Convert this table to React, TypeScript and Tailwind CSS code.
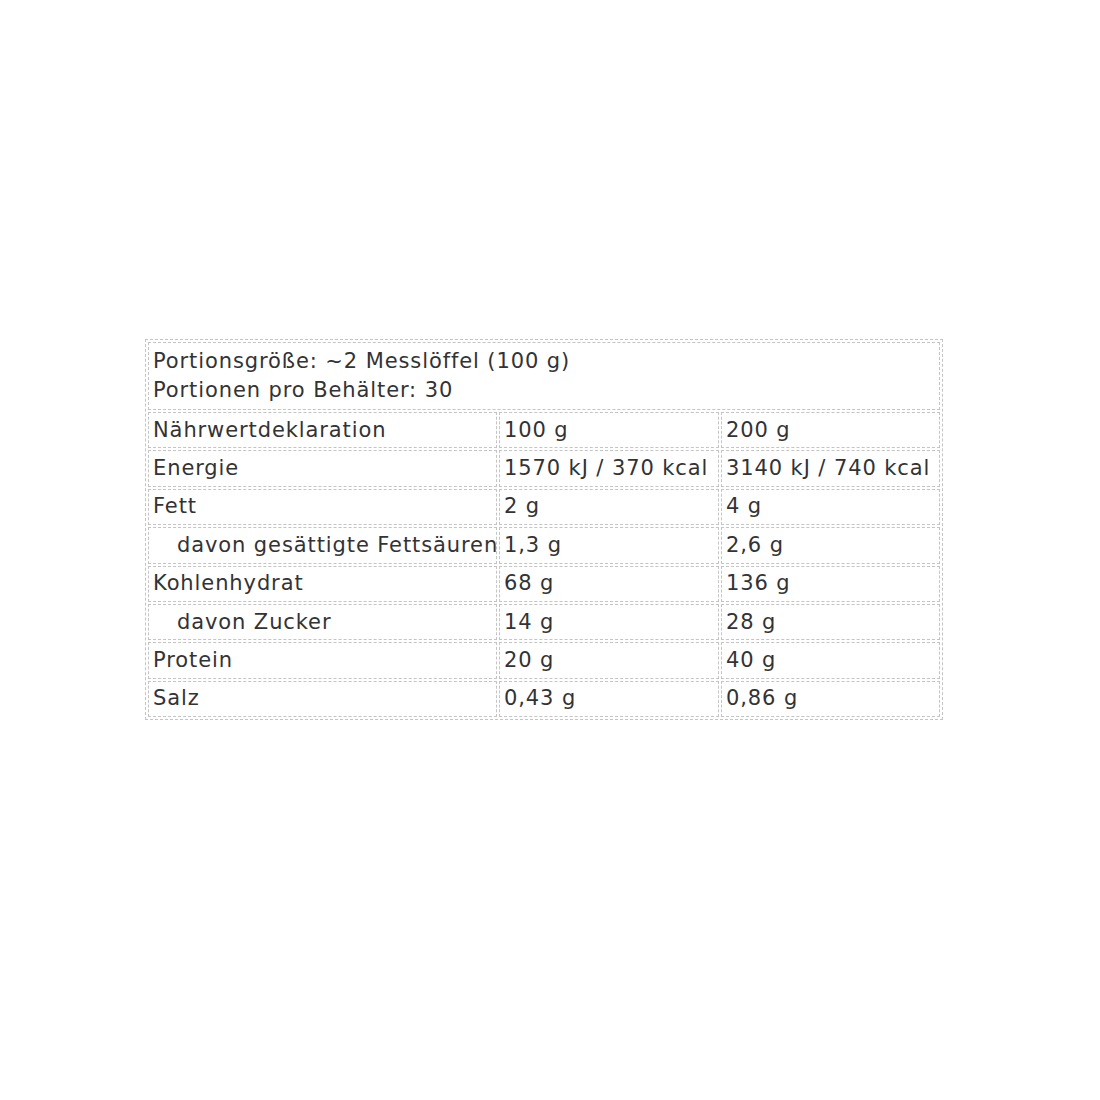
import React from "react";

const rows: { label: string; a: string; b: string; sub?: boolean }[] = [
  { label: "Nährwertdeklaration", a: "100 g", b: "200 g" },
  { label: "Energie", a: "1570 kJ / 370 kcal", b: "3140 kJ / 740 kcal" },
  { label: "Fett", a: "2 g", b: "4 g" },
  { label: "davon gesättigte Fettsäuren", a: "1,3 g", b: "2,6 g", sub: true },
  { label: "Kohlenhydrat", a: "68 g", b: "136 g" },
  { label: "davon Zucker", a: "14 g", b: "28 g", sub: true },
  { label: "Protein", a: "20 g", b: "40 g" },
  { label: "Salz", a: "0,43 g", b: "0,86 g" },
];

const cell = "border border-dashed border-[#c4c4c4] px-[4px] h-[36.4px] p-0 align-middle whitespace-nowrap";

export default function App() {
  return (
    <div className="min-h-[1100px] bg-white pt-[339px] pl-[145px]">
      <table
        className="border border-dashed border-[#c4c4c4] border-separate border-spacing-[2px] table-fixed w-[798px] text-[#333] text-[21px] tracking-[0.9px] leading-[29px] font-['DejaVu_Sans',sans-serif]"
      >
        <colgroup>
          <col className="w-[349px]" />
          <col className="w-[220px]" />
          <col className="w-[219px]" />
        </colgroup>
        <tbody>
          <tr>
            <td colSpan={3} className="border border-dashed border-[#c4c4c4] px-[4px] h-[68px] align-middle">
              <div>Portionsgröße: ~2 Messlöffel (100 g)</div>
              <div>Portionen pro Behälter: 30</div>
            </td>
          </tr>
          {rows.map((r) => (
            <tr key={r.label}>
              <td className={cell}>
                <span className={r.sub ? "pl-[24px]" : ""}>{r.label}</span>
              </td>
              <td className={cell}>{r.a}</td>
              <td className={cell}>{r.b}</td>
            </tr>
          ))}
        </tbody>
      </table>
    </div>
  );
}
